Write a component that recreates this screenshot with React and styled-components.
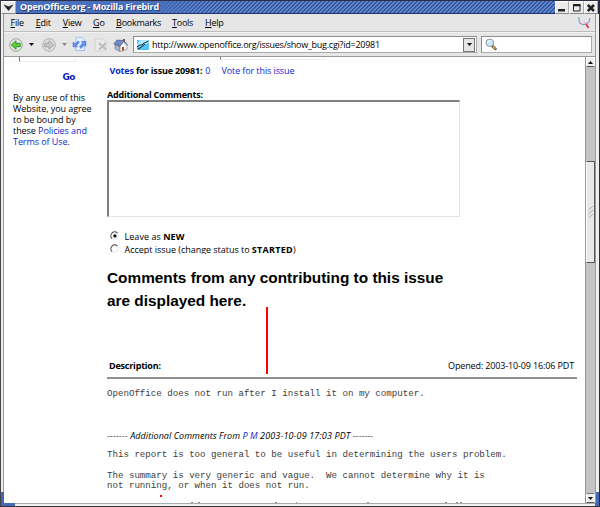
import React from 'react';
import styled, { createGlobalStyle } from 'styled-components';

const Global = createGlobalStyle`
  * { box-sizing: border-box; }
  html, body { margin: 0; padding: 0; overflow: hidden; }
  svg { display: block; flex: none; }
`;

const Window = styled.div`
  width: 600px;
  height: 507px;
  display: flex;
  flex-direction: column;
  background: #e6e6e6;
  color: #000;
  font: 9px/11px "Open Sans", "Noto Sans", sans-serif;
  overflow: hidden;
  position: relative;
`;
const TitleBar = styled.header`
  height: 14px;
  flex: none;
  display: flex;
  border-top: 1px solid #2a2f45;
  border-left: 1px solid #444;
  border-right: 2px solid #26293a;
  background: #e6e6e6;
`;
const TitleFill = styled.div`
  flex: 1;
  padding-left: 4px;
  color: #fff;
  font-weight: 700;
  line-height: 12px;
  letter-spacing: -0.2px;
  text-shadow: 1px 1px 0 #26407c;
  white-space: nowrap;
  border-bottom: 1px solid #1d3266;
  background: linear-gradient(90deg, #4a70be 0, #4a70be 130px, transparent 200px),
    repeating-linear-gradient(135deg, #34569f 0 1.4px, #6389cf 1.4px 2.83px);
`;
const TitleButton = styled.span`
  width: ${(p) => p.$w || 14}px;
  display: flex;
  align-items: center;
  justify-content: center;
  background: #ececec;
  border: 1px solid #fff;
  border-right-color: #aaa;
  border-bottom-color: #888;
`;
const Frame = styled.div`
  flex: 1;
  min-height: 0;
  display: flex;
  flex-direction: column;
  border-left: 1px solid #444;
  border-right: 1px solid #2e2e2e;
  border-bottom: 1px solid #363638;
  padding: 0 3px 2px 2px;
  background: #efefef;
`;
const Inner = styled.div`
  flex: 1;
  min-height: 0;
  display: flex;
  flex-direction: column;
  border-left: 1px solid #9b9491;
  border-right: 1px solid #999;
  border-bottom: 1px solid #aaa;
  background: #e6e6e6;
`;
const MenuBar = styled.nav`
  height: 18px;
  flex: none;
  border-bottom: 1px solid #bdbdbd;
  display: grid;
  grid-template-columns: 25.3px 27px 30.3px 23px 56px 33px 1fr auto;
  padding: 0 4px 0 6.5px;
  line-height: 18px;
  letter-spacing: -0.27px;
`;
const Key = styled.span`
  text-decoration: underline;
  text-underline-offset: 1px;
`;
const Toolbar = styled.div`
  height: 25px;
  flex: none;
  display: flex;
  align-items: center;
  border-top: 1px solid #f2f2f2;
  border-bottom: 1px solid #999;
  padding: 0 3px 0 5px;
`;
const ToolIcon = styled.span`
  margin-right: ${(p) => p.$gap || 0}px;
`;
const Field = styled.div`
  height: 17px;
  width: ${(p) => p.$w}px;
  margin-right: ${(p) => p.$gap || 0}px;
  border: 1px solid #8c8c8c;
  border-right-color: #aaa;
  border-bottom-color: #aaa;
  background: #fff;
  display: flex;
  align-items: center;
  padding: 0 1px 0 3px;
`;
const Url = styled.span`
  flex: 1;
  padding-left: 3px;
  letter-spacing: -0.25px;
  white-space: nowrap;
`;
const Drop = styled.span`
  width: 12px;
  height: 14px;
  display: grid;
  place-items: center;
  background: #e6e6e6;
  border: 1px solid #777;
`;
const Viewport = styled.div`
  flex: 1;
  min-height: 0;
  display: flex;
  background: #fff;
`;
const Sidebar = styled.aside`
  width: 103px;
  padding-left: 9px;
  letter-spacing: -0.07px;
`;
const CutInput = styled.div`
  width: ${(p) => p.$w}px;
  height: ${(p) => p.$h}px;
  margin-left: ${(p) => p.$x}px;
  border-left: 1px solid #777;
  border-bottom: 1px solid #eee;
  border-right: 1px solid #eee;
`;
const Go = styled.div`
  margin: 10px 0 9px 49.5px;
  font: 700 9px/11px "DejaVu Sans", sans-serif;
  letter-spacing: -0.7px;
  color: #0a1fc0;
`;
const Link = styled.a`
  color: #0a28d0;
`;
const Main = styled.main`
  flex: 1;
  min-width: 0;
  overflow: hidden;
`;
const Line = styled.div`
  height: ${(p) => p.$h || 11}px;
  margin: ${(p) => p.$top || 0}px 0 0 ${(p) => p.$x || 0}px;
  letter-spacing: ${(p) => p.$ls || 0}px;
  font-weight: ${(p) => (p.$bold ? 700 : 400)};
  font-style: ${(p) => (p.$italic ? 'italic' : 'normal')};
  white-space: pre;
  display: flex;
  overflow: ${(p) => (p.$clip ? 'hidden' : 'visible')};
`;
const Span = styled.span`
  font-weight: ${(p) => (p.$bold ? 700 : 'inherit')};
  letter-spacing: ${(p) => (p.$ls === undefined ? 'inherit' : `${p.$ls}px`)};
  margin-left: ${(p) => p.$x || 0}px;
`;
const TextArea = styled.div`
  width: 353px;
  height: 117px;
  border: 2px solid #808080;
  border-right: 1px solid #e4e4e4;
  border-bottom: 1px solid #e4e4e4;
`;
const RadioMark = styled.span`
  width: 17.5px;
  padding: 0 0 0 3px;
`;
const Heading = styled.h1`
  margin: 12px 0 0;
  font: 700 15.36px/23px "Liberation Sans", Arial, sans-serif;
`;
const DescriptionRow = styled.div`
  display: flex;
  justify-content: space-between;
  margin-top: 48px;
  padding: 0 3px 0 2px;
  width: 470px;
  height: 19px;
  line-height: 11px;
  border-bottom: 2px solid #909090;
  letter-spacing: -0.14px;
`;
const Mono = styled.pre`
  margin: ${(p) => p.$top}px 0 0;
  font: 9.14px/10.3px "Liberation Mono", "Courier New", monospace;
  color: #3c3c3c;
`;
const ScrollBar = styled.div`
  width: 10px;
  display: flex;
  flex-direction: column;
  background: #c4c4c4;
  border-left: 1px solid #999;
`;
const ScrollButton = styled.span`
  height: 10px;
  flex: none;
  display: grid;
  place-items: center;
  background: #eee;
  border: 1px solid #fff;
  border-bottom-color: #555;
  border-top-color: ${(p) => (p.$down ? '#777' : '#fff')};
`;
const Thumb = styled.span`
  height: 102px;
  margin: 94px 0 auto;
  display: grid;
  place-items: center;
  background: #e8e8e8;
  border: 1px solid #555;
  border-left-color: #fff;
`;
const RedStem = styled.div`
  position: absolute;
  left: 266px;
  top: 307px;
  width: 2px;
  height: 67px;
  background: #f00;
`;
const RedDot = styled(RedStem)`
  left: 160px;
  top: 495px;
  height: 2px;
`;
const Corner = styled.span`
  position: absolute;
  bottom: 1px;
  height: 14px;
  width: ${(p) => (p.$right ? 4 : 14)}px;
  ${(p) => (p.$right ? 'right: 1px; border-right: 3px solid #4468b8;' : 'left: 1px; border-left: 3px solid #4468b8;')}
  border-bottom: 3px solid #4468b8;
`;

const Nav = ({ fwd }) => (
  <svg width="14" height="14" viewBox="0 0 14 14">
    <circle cx="7" cy="7" r="6.3" fill={fwd ? '#dedede' : '#e2eadf'} stroke={fwd ? '#a8a8a8' : '#8b9d88'} strokeWidth=".9" />
    <path
      d="M2.3 7L7 2.8V5.3H11.2V8.7H7V11.2Z"
      transform={fwd ? 'rotate(180 7 7)' : undefined}
      fill={fwd ? '#c8c8c8' : '#5fd03c'}
      stroke={fwd ? '#999' : '#1d7c20'}
      strokeWidth=".8"
    />
  </svg>
);
const Caret = ({ c = '#111', up }) => (
  <svg width="5" height="3" viewBox="0 0 5 3">
    <path d={up ? 'M0 3L2.5 0L5 3Z' : 'M0 0H5L2.5 3Z'} fill={c} />
  </svg>
);
const Reload = () => (
  <svg width="15" height="15" viewBox="0 0 15 15">
    <path d="M4 .5H10L12.5 3V13.5H3.5Z" fill="#e3edff" stroke="#9db7ea" strokeWidth=".8" />
    <path d="M1 5V9.8H5.8L4.5 8.4L7.4 5.4L6 4L3 6.8Z" fill="#5f90ee" stroke="#3b6cd2" strokeWidth=".5" />
    <path d="M14 9.3V4.5H9.2L10.6 6L7.6 9.8L9 11.5L12.3 8Z" fill="#5f90ee" stroke="#3b6cd2" strokeWidth=".5" />
  </svg>
);
const Stop = () => (
  <svg width="14" height="14" viewBox="0 0 14 14">
    <path d="M1 1H9L12 4V13H1Z" fill="#ebebeb" stroke="#d2d2d2" />
    <path d="M5 5L12 11.5M12 5L5 11.5" stroke="#bcbcbc" strokeWidth="2.2" />
  </svg>
);
const Home = () => (
  <svg width="15" height="14" viewBox="0 0 15 14">
    <path d="M2 6L7 9V13.5L2 11Z" fill="#aab4cc" stroke="#667" strokeWidth=".5" />
    <path d="M7 8L10.5 4L14 7V11.5L7 13.6Z" fill="#f4f1eb" stroke="#778" strokeWidth=".5" />
    <path d="M.8 6L4 2L10.7 2.6L7 8.3L5 7.5Z" fill="#6e8cc0" stroke="#3c5182" strokeWidth=".6" />
    <path d="M10.5 2.7L14.6 7.3" stroke="#5870a0" strokeWidth="1.1" />
    <path d="M10 1H12V4L10 2.8Z" fill="#8a4a36" />
    <path d="M9 9H11V12.5L9 13Z" fill="#ba4a28" />
  </svg>
);
const SiteIcon = () => (
  <svg width="12" height="10" viewBox="0 0 12 10">
    <path d="M0 0H12V10H0Z" fill="#52c5f4" />
    <path d="M3 0H12V3L0 7V5Z" fill="#b2e8fb" />
    <path d="M0 7C3 4 4 6 6 4C8 1.8 9 3 11.5 1M1 9C4 8 5 6 8 4" fill="none" stroke="#0b1826" strokeWidth="1" />
  </svg>
);
const Search = () => (
  <svg width="12" height="13" viewBox="0 0 12 13">
    <path d="M7.4 8L10.5 11" stroke="#71552b" strokeWidth="2.5" strokeLinecap="round" />
    <path d="M8 8.4L10.4 10.7" stroke="#e2ba63" strokeWidth="1.2" />
    <circle cx="4.8" cy="4.8" r="3.8" fill="#cce5f8" stroke="#8899b5" />
    <path d="M3 4.5Q3.6 2.8 5.3 2.8" stroke="#fff" fill="none" />
  </svg>
);
const Throbber = () => (
  <svg width="13" height="16" viewBox="0 0 13 16">
    <path d="M1 3C.3 8.5 3 11 6 10.5C10 10.3 11.9 7 11.6 4" fill="none" stroke="#8e9fca" strokeWidth="1.3" />
    <path d="M2.3 4C2.3 7.5 4 9 6 9C8 8.5 10 7 11 5" fill="none" stroke="#dde3f4" strokeWidth=".8" />
    <circle cx="7.2" cy="9" r="1.3" fill="#f3b5b5" />
    <path d="M8 10L10.5 14" stroke="#d22c34" strokeWidth="1.5" />
  </svg>
);
const Radio = ({ on }) => (
  <svg width="10" height="10" viewBox="0 0 10 10">
    <circle cx="4.7" cy="4.7" r="3.6" fill="#fff" stroke="#e3e3e3" strokeWidth=".9" />
    <path d="M2 7.5A3.8 3.8 0 0 1 7.4 2" fill="none" stroke="#555" strokeWidth="1.1" />
    {on && <circle cx="4.9" cy="4.9" r="1.7" fill="#111" />}
  </svg>
);

export default function App() {
  return (
    <Window>
      <Global />
      <TitleBar>
        <TitleButton $w={15}>
          <svg width="9" height="7" viewBox="0 0 9 7"><path d="M0 1L4.5 6.5L9 1L4.5 2.8Z" fill="#222" stroke="#222" strokeWidth=".6" /></svg>
        </TitleButton>
        <TitleFill>OpenOffice.org - Mozilla Firebird</TitleFill>
        <TitleButton>
          <svg width="8" height="8" viewBox="0 0 8 8"><path d="M0 5H7V7.5H0Z" fill="#222" /></svg>
        </TitleButton>
        <TitleButton $w={15}>
          <svg width="8" height="8" viewBox="0 0 8 8"><path d="M.5 1H7V7H.5Z" fill="none" stroke="#222" /><path d="M0 0H7.5V2.3H0Z" fill="#222" /></svg>
        </TitleButton>
        <TitleButton>
          <svg width="8" height="8" viewBox="0 0 8 8"><path d="M.8 1L7 7M7 1L.8 7" stroke="#222" strokeWidth="2.5" /></svg>
        </TitleButton>
      </TitleBar>
      <Frame>
        <Inner>
          <MenuBar>
            <span><Key>F</Key>ile</span>
            <span><Key>E</Key>dit</span>
            <span><Key>V</Key>iew</span>
            <span><Key>G</Key>o</span>
            <span><Key>B</Key>ookmarks</span>
            <span><Key>T</Key>ools</span>
            <span><Key>H</Key>elp</span>
            <Throbber />
          </MenuBar>
          <Toolbar>
            <ToolIcon $gap={6}><Nav /></ToolIcon>
            <ToolIcon $gap={8}><Caret /></ToolIcon>
            <ToolIcon $gap={6}><Nav fwd /></ToolIcon>
            <ToolIcon $gap={5}><Caret c="#888" /></ToolIcon>
            <ToolIcon $gap={7}><Reload /></ToolIcon>
            <ToolIcon $gap={5}><Stop /></ToolIcon>
            <ToolIcon $gap={5}><Home /></ToolIcon>
            <Field $w={345} $gap={4}>
              <SiteIcon />
              <Url>http://www.openoffice.org/issues/show_bug.cgi?id=20981</Url>
              <Drop><Caret /></Drop>
            </Field>
            <Field $w={111}><Search /></Field>
          </Toolbar>
          <Viewport>
            <Sidebar>
              <CutInput $w={57} $h={5} $x={6} />
              <Go>Go</Go>
              By any use of this<br />Website, you agree<br />to be bound by<br />these <Link>Policies and</Link><br /><Link>Terms of Use</Link>.
            </Sidebar>
            <Main>
              <CutInput $w={105} $h={3} $x={113} />
              <Line $top={5} $x={2.5}>
                <Span $bold $ls={-0.17}><Link>Votes</Link> for issue 20981:</Span>
                <Span $x={3}><Link>0</Link></Span>
                <Span $x={11} $ls={-0.1}><Link>Vote for this issue</Link></Span>
              </Line>
              <Line $top={13} $bold $ls={-0.22}>Additional Comments:</Line>
              <TextArea />
              <Line $top={14} $h={13}>
                <RadioMark><Radio on /></RadioMark>
                <Span $ls={0.05}>Leave as <Span $bold>NEW</Span></Span>
              </Line>
              <Line $h={10} $clip>
                <RadioMark><Radio /></RadioMark>
                <Span $ls={-0.03}>Accept issue (change status to <Span $bold $ls={0.28}>STARTED</Span>)</Span>
              </Line>
              <Heading>Comments from any contributing to this issue<br />are displayed here.</Heading>
              <DescriptionRow>
                <Span $bold $ls={-0.21}>Description:</Span>
                <span>Opened: 2003-10-09 16:06 PDT</span>
              </DescriptionRow>
              <Mono $top={10}>OpenOffice does not run after I install it on my computer.</Mono>
              <Line $top={31} $italic $ls={0.05}>
                <Span>
                  <Span $ls={0.15}>------- </Span>Additional Comments From <Link>P M</Link><Span $ls={0.14}> 2003-10-09 17:03 PDT </Span><Span $ls={0.05}>-------</Span>
                </Span>
              </Line>
              <Mono $top={9}>{`This report is too general to be useful in determining the users problem.

The summary is very generic and vague.  We cannot determine why it is
not running, or when it does not run.`}</Mono>
              <svg width="400" height="13" viewBox="0 0 400 13">
                <path d="M84 11.5H86M91 11.5H93M168 11.5H170M189 11.5H190M260 11.5H262M338 11.5H340M349 11.5H351M353 11.5H355" stroke="#888" />
              </svg>
            </Main>
            <ScrollBar>
              <ScrollButton><Caret up /></ScrollButton>
              <Thumb>
                <svg width="6" height="12" viewBox="0 0 6 12"><path d="M.5 4L5 0M.5 8L5 4M.5 12L5 8" stroke="#999" strokeWidth=".8" /></svg>
              </Thumb>
              <ScrollButton $down><Caret /></ScrollButton>
            </ScrollBar>
          </Viewport>
        </Inner>
      </Frame>
      <RedStem />
      <RedDot />
      <Corner />
      <Corner $right />
    </Window>
  );
}
